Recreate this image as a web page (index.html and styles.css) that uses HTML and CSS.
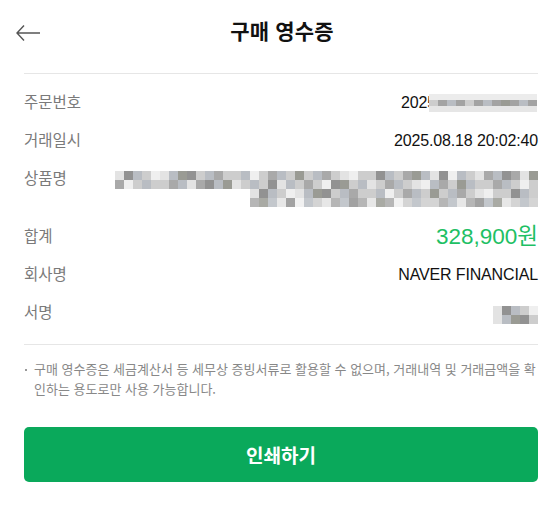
FILE: index.html
```html
<!DOCTYPE html>
<html lang="ko">
<head>
<meta charset="utf-8">
<title>구매 영수증</title>
<link rel="stylesheet" href="styles.css">
</head>
<body>
<div class="page">
  <header class="header">
    <button class="back" aria-label="뒤로">
      <svg width="26" height="18" viewBox="0 0 26 18"><path d="M25 9H2M9 1.5L2 9l7 7.5" fill="none" stroke="#555" stroke-width="1.4"/></svg>
    </button>
    <h1 class="title">구매 영수증</h1>
  </header>

  <section class="info">
    <div class="row">
      <span class="label">주문번호</span>
      <span class="value order"><span>2025</span><span class="pix pix-order"><i></i><i></i><i></i><i></i><i></i><i></i><i></i><i></i><i></i><i></i><i></i><i></i><i></i><i></i><i></i><i></i><i></i><i></i><i></i><i></i><i></i><i></i><i></i><i></i><i></i><i></i><i></i><i></i><i></i><i></i><i></i><i></i><i></i><i></i><i></i><i></i></span></span>
    </div>
    <div class="row">
      <span class="label">거래일시</span>
      <span class="value">2025.08.18 20:02:40</span>
    </div>
    <div class="row row-product">
      <span class="label">상품명</span>
      <div class="value product">
        <span class="pix pix-line1"><i></i><i></i><i></i><i></i><i></i><i></i><i></i><i></i><i></i><i></i><i></i><i></i><i></i><i></i><i></i><i></i><i></i><i></i><i></i><i></i><i></i><i></i><i></i><i></i><i></i><i></i><i></i><i></i><i></i><i></i><i></i><i></i><i></i><i></i><i></i><i></i><i></i><i></i><i></i><i></i><i></i><i></i><i></i><i></i><i></i><i></i><i></i><i></i><i></i><i></i><i></i><i></i><i></i><i></i><i></i><i></i><i></i><i></i><i></i><i></i><i></i><i></i><i></i><i></i><i></i><i></i><i></i><i></i><i></i><i></i><i></i><i></i><i></i><i></i><i></i><i></i><i></i><i></i><i></i><i></i><i></i><i></i><i></i><i></i><i></i><i></i><i></i><i></i><i></i><i></i><i></i><i></i><i></i><i></i></span>
        <span class="pix pix-line2"><i></i><i></i><i></i><i></i><i></i><i></i><i></i><i></i><i></i><i></i><i></i><i></i><i></i><i></i><i></i><i></i><i></i><i></i><i></i><i></i><i></i><i></i><i></i><i></i><i></i><i></i><i></i><i></i><i></i><i></i><i></i><i></i><i></i><i></i><i></i><i></i><i></i><i></i><i></i><i></i><i></i><i></i><i></i><i></i><i></i><i></i><i></i><i></i><i></i><i></i><i></i><i></i><i></i><i></i><i></i><i></i><i></i><i></i><i></i><i></i><i></i><i></i><i></i><i></i></span>
      </div>
    </div>
    <div class="row">
      <span class="label">합계</span>
      <span class="value amount">328,900원</span>
    </div>
    <div class="row">
      <span class="label">회사명</span>
      <span class="value">NAVER FINANCIAL</span>
    </div>
    <div class="row">
      <span class="label">서명</span>
      <span class="value"><span class="pix pix-sign"><i></i><i></i><i></i><i></i><i></i><i></i><i></i><i></i><i></i><i></i></span></span>
    </div>
  </section>

  <ul class="notes">
    <li>구매 영수증은 세금계산서 등 세무상 증빙서류로 활용할 수 없으며, 거래내역 및 거래금액을 확인하는 용도로만 사용 가능합니다.</li>
  </ul>

  <button class="print">인쇄하기</button>
</div>
</body>
</html>
```

FILE: styles.css
```css
* { box-sizing: border-box; }

html, body {
  margin: 0;
  padding: 0;
  background: #fff;
}

body {
  font-family: "Liberation Sans", "Noto Sans CJK KR", sans-serif;
  color: #111;
}

.page {
  width: 558px;
  padding: 0 20px 0 24px;
}

.header {
  position: relative;
  height: 64px;
  display: flex;
  align-items: center;
  justify-content: center;
}

.back {
  position: absolute;
  left: -9px;
  top: 24px;
  width: 26px;
  height: 18px;
  padding: 0;
  border: 0;
  background: none;
  display: block;
}

.back svg { display: block; }

.title {
  margin: 0;
  font-size: 21px;
  font-weight: 700;
  line-height: 28px;
  color: #111;
  letter-spacing: 0.2px;
  padding-left: 2px;
}

.info {
  margin-top: 9px;
  border-top: 1px solid #e6e6e6;
  border-bottom: 1px solid #e6e6e6;
  padding: 18px 0 20px;
  display: flex;
  flex-direction: column;
  gap: 16px;
}

.row {
  display: flex;
  justify-content: space-between;
  align-items: center;
  height: 22px;
}

.row-product {
  height: 42px;
  align-items: flex-start;
}

.label {
  font-size: 15.5px;
  line-height: 22px;
  color: #7a7a7a;
}

.value {
  font-size: 16px;
  line-height: 22px;
  color: #111;
  letter-spacing: -0.15px;
  text-align: right;
}

.order {
  display: flex;
  align-items: center;
}

.amount {
  font-size: 22.5px;
  color: #1ec064;
  letter-spacing: 0;
}

.product {
  display: flex;
  flex-direction: column;
  align-items: flex-end;
  padding-top: 3px;
}

/* pixelated (masked) blocks */
.pix {
  display: grid;
}

.pix i {
  display: block;
  background: #cdcdcd;
}

.pix i:nth-child(3n) { background: #a9a9a9; }
.pix i:nth-child(5n+1) { background: #e3e3e3; }
.pix i:nth-child(7n+2) { background: #929292; }
.pix i:nth-child(4n+3) { background: #b9bdc3; }
.pix i:nth-child(11n+5) { background: #efefef; }
.pix i:nth-child(13n+8) { background: #9a9b94; }

.pix-order {
  grid-template-columns: repeat(12, 9px);
  grid-auto-rows: 6px;
  margin-left: -7px;
  margin-right: 1px;
}

.pix-order i:nth-child(-n+12) { background: #ececec; }
.pix-order i:nth-child(n+25) { background: #e6e6e6; }
.pix-order i:nth-child(n+13):nth-child(-n+24):nth-child(2n) { background: #a3a3a3; }

.pix-line1 {
  grid-template-columns: repeat(47, 9px);
  grid-auto-rows: 9px;
}

.pix-line2 {
  grid-template-columns: repeat(32, 9px);
  grid-auto-rows: 9px;
}

.pix-line2 i:nth-child(n+33) { opacity: 0.85; }

.pix-sign {
  grid-template-columns: repeat(5, 9px);
  grid-auto-rows: 9px;
  margin-top: 3px;
}

.notes {
  list-style: none;
  margin: 0;
  padding: 14px 0 0 10px;
}

.notes li {
  position: relative;
  font-size: 13px;
  line-height: 20px;
  color: #888;
  font-family: "Noto Sans CJK KR", sans-serif;
}

.notes li::before {
  content: "";
  position: absolute;
  left: -9px;
  top: 10px;
  width: 2px;
  height: 2px;
  background: #999;
}

.print {
  display: block;
  width: 100%;
  height: 55px;
  margin-top: 28px;
  border: 0;
  border-radius: 5px;
  background: #0aa95b;
  color: #fff;
  font-family: "Noto Sans CJK KR", sans-serif;
  font-size: 19px;
  font-weight: 700;
  letter-spacing: 0;
}
```
